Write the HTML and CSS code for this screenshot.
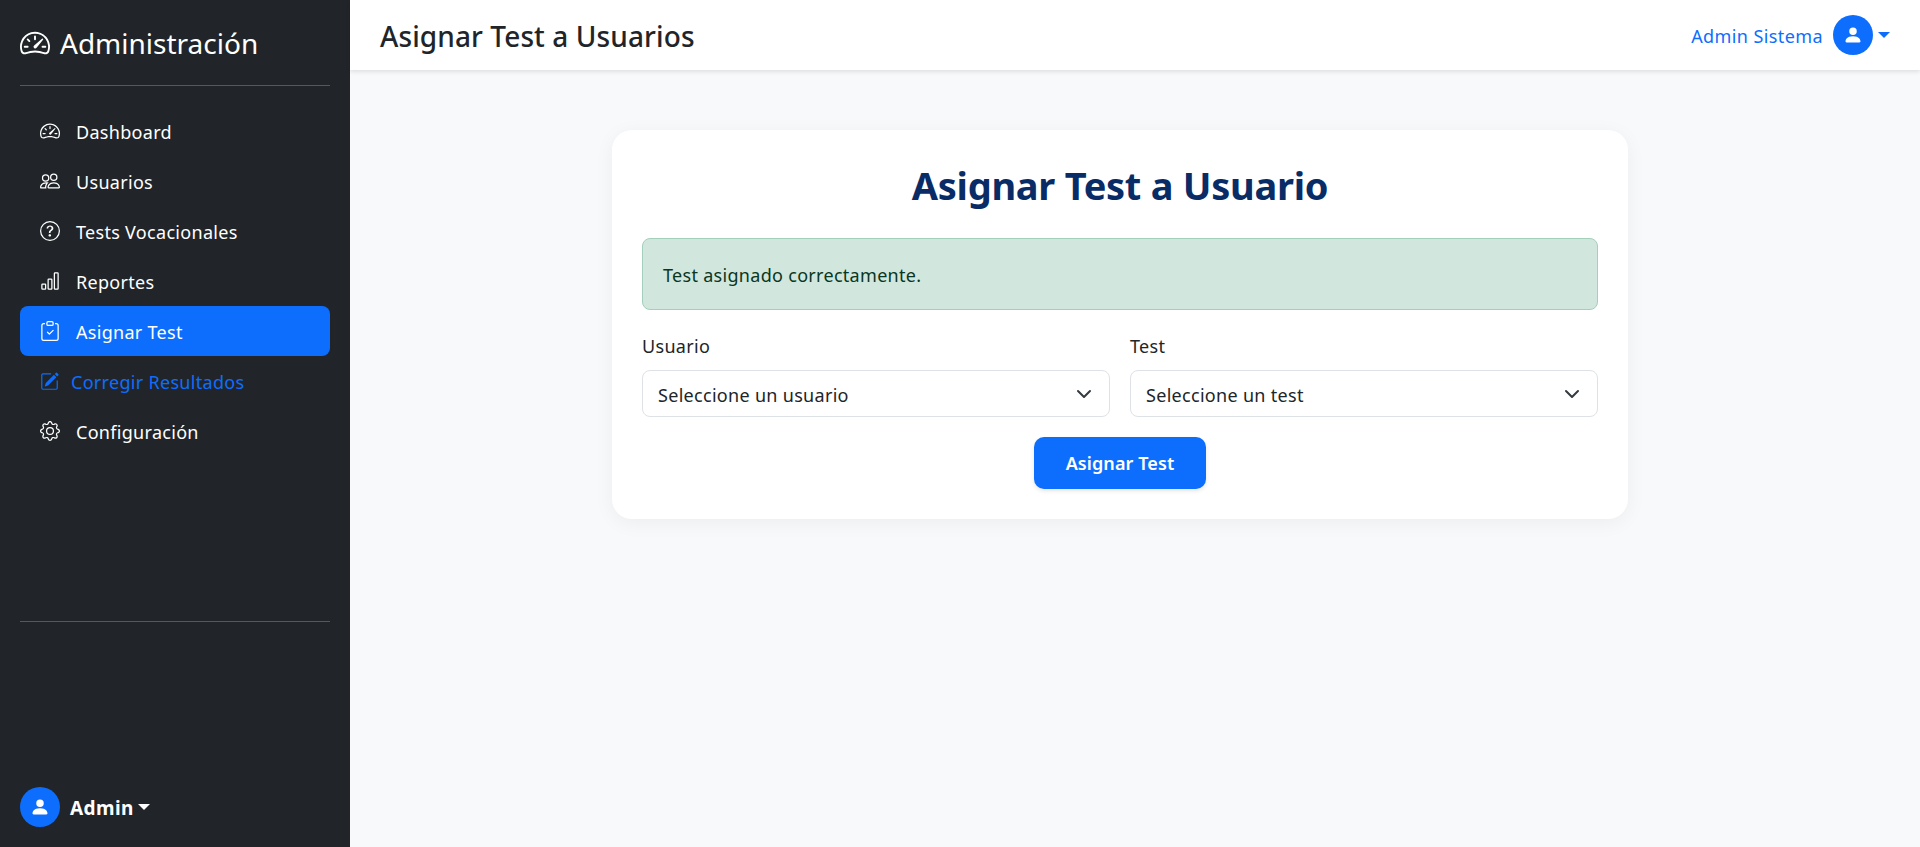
FILE: index.html
```html
<!DOCTYPE html>
<html lang="es">
  <head>
    <meta charset="utf-8" />
    <title>Asignar Test a Usuarios</title>

    <link rel="stylesheet" href="styles.css">
  </head>

  <body>
    <aside class="sidebar">
      <div class="brand">
        <svg class="brand__icon" viewBox="0 0 16 16" fill="currentColor"><path d="M8 4a.5.5 0 0 1 .5.5V6a.5.5 0 0 1-1 0V4.5A.5.5 0 0 1 8 4zM3.732 5.732a.5.5 0 0 1 .707 0l.915.914a.5.5 0 1 1-.708.708l-.914-.915a.5.5 0 0 1 0-.707zM2 10a.5.5 0 0 1 .5-.5h1.586a.5.5 0 0 1 0 1H2.5A.5.5 0 0 1 2 10zm9.5 0a.5.5 0 0 1 .5-.5h1.5a.5.5 0 0 1 0 1H12a.5.5 0 0 1-.5-.5zm.754-4.246a.389.389 0 0 0-.527-.02L7.547 9.31a.91.91 0 1 0 1.302 1.258l3.434-4.297a.389.389 0 0 0-.029-.518z"/><path fill-rule="evenodd" d="M0 10a8 8 0 1 1 15.547 2.661c-.442 1.253-1.845 1.602-2.932 1.25C11.309 13.488 9.475 13 8 13c-1.474 0-3.31.488-4.615.911-1.087.352-2.49.003-2.932-1.25A7.988 7.988 0 0 1 0 10zm8-7a7 7 0 0 0-6.603 9.329c.203.575.923.876 1.68.63C4.397 12.533 6.358 12 8 12s3.604.532 4.923.96c.757.245 1.477-.056 1.68-.631A7 7 0 0 0 8 3z"/></svg>
        <span>Administración</span>
      </div>
      <hr class="rule" />

      <nav class="nav">
        <a class="nav__link" href="#">
          <svg class="nav__icon" viewBox="0 0 16 16" fill="currentColor"><path d="M8 4a.5.5 0 0 1 .5.5V6a.5.5 0 0 1-1 0V4.5A.5.5 0 0 1 8 4zM3.732 5.732a.5.5 0 0 1 .707 0l.915.914a.5.5 0 1 1-.708.708l-.914-.915a.5.5 0 0 1 0-.707zM2 10a.5.5 0 0 1 .5-.5h1.586a.5.5 0 0 1 0 1H2.5A.5.5 0 0 1 2 10zm9.5 0a.5.5 0 0 1 .5-.5h1.5a.5.5 0 0 1 0 1H12a.5.5 0 0 1-.5-.5zm.754-4.246a.389.389 0 0 0-.527-.02L7.547 9.31a.91.91 0 1 0 1.302 1.258l3.434-4.297a.389.389 0 0 0-.029-.518z"/><path fill-rule="evenodd" d="M0 10a8 8 0 1 1 15.547 2.661c-.442 1.253-1.845 1.602-2.932 1.25C11.309 13.488 9.475 13 8 13c-1.474 0-3.31.488-4.615.911-1.087.352-2.49.003-2.932-1.25A7.988 7.988 0 0 1 0 10zm8-7a7 7 0 0 0-6.603 9.329c.203.575.923.876 1.68.63C4.397 12.533 6.358 12 8 12s3.604.532 4.923.96c.757.245 1.477-.056 1.68-.631A7 7 0 0 0 8 3z"/></svg>
          <span class="nav__text">Dashboard</span>
        </a>
        <a class="nav__link" href="#">
          <svg class="nav__icon" viewBox="0 0 16 16" fill="currentColor"><path d="M15 14s1 0 1-1-1-4-5-4-5 3-5 4 1 1 1 1h8Zm-7.978-1A.261.261 0 0 1 7 12.996c.001-.264.167-1.03.76-1.72C8.312 10.629 9.282 10 11 10c1.717 0 2.687.63 3.24 1.276.593.69.758 1.457.76 1.72l-.008.002a.274.274 0 0 1-.014.002H7.022ZM11 7a2 2 0 1 0 0-4 2 2 0 0 0 0 4Zm3-2a3 3 0 1 1-6 0 3 3 0 0 1 6 0ZM6.936 9.28a5.88 5.88 0 0 0-1.23-.247A7.35 7.35 0 0 0 5 9c-4 0-5 3-5 4 0 .667.333 1 1 1h4.216A2.238 2.238 0 0 1 5 13c0-1.01.377-2.042 1.09-2.904.243-.294.526-.569.846-.816ZM4.92 10A5.493 5.493 0 0 0 4 13H1c0-.26.164-1.03.76-1.724.545-.636 1.492-1.256 3.16-1.275ZM1.5 5.5a3 3 0 1 1 6 0 3 3 0 0 1-6 0Zm3-2a2 2 0 1 0 0 4 2 2 0 0 0 0-4Z"/></svg>
          <span class="nav__text">Usuarios</span>
        </a>
        <a class="nav__link" href="#">
          <svg class="nav__icon" viewBox="0 0 16 16" fill="currentColor"><path d="M8 15A7 7 0 1 1 8 1a7 7 0 0 1 0 14zm0 1A8 8 0 1 0 8 0a8 8 0 0 0 0 16z"/><path d="M5.255 5.786a.237.237 0 0 0 .241.247h.825c.138 0 .248-.113.266-.25.09-.656.54-1.134 1.342-1.134.686 0 1.314.343 1.314 1.168 0 .635-.374.927-.965 1.371-.673.489-1.206 1.06-1.168 1.987l.003.217a.25.25 0 0 0 .25.246h.811a.25.25 0 0 0 .25-.25v-.105c0-.718.273-.927 1.01-1.486.609-.463 1.244-.977 1.244-2.056 0-1.511-1.276-2.241-2.673-2.241-1.267 0-2.655.59-2.75 2.286zm1.557 5.763c0 .533.425.927 1.01.927.609 0 1.028-.394 1.028-.927 0-.552-.42-.94-1.029-.94-.584 0-1.009.388-1.009.94z"/></svg>
          <span class="nav__text">Tests Vocacionales</span>
        </a>
        <a class="nav__link" href="#">
          <svg class="nav__icon" viewBox="0 0 16 16" fill="currentColor"><path d="M4 11H2v3h2v-3zm5-4H7v7h2V7zm5-5v12h-2V2h2zm-2-1a1 1 0 0 0-1 1v12a1 1 0 0 0 1 1h2a1 1 0 0 0 1-1V2a1 1 0 0 0-1-1h-2zM6 7a1 1 0 0 1 1-1h2a1 1 0 0 1 1 1v7a1 1 0 0 1-1 1H7a1 1 0 0 1-1-1V7zm-5 4a1 1 0 0 1 1-1h2a1 1 0 0 1 1 1v3a1 1 0 0 1-1 1H2a1 1 0 0 1-1-1v-3z"/></svg>
          <span class="nav__text">Reportes</span>
        </a>
        <a class="nav__link nav__link--active" href="#">
          <svg class="nav__icon" viewBox="0 0 16 16" fill="currentColor"><path fill-rule="evenodd" d="M10.854 7.146a.5.5 0 0 1 0 .708l-3 3a.5.5 0 0 1-.708 0l-1.5-1.5a.5.5 0 1 1 .708-.708L7.5 9.793l2.646-2.647a.5.5 0 0 1 .708 0z"/><path d="M4 1.5H3a2 2 0 0 0-2 2V14a2 2 0 0 0 2 2h10a2 2 0 0 0 2-2V3.5a2 2 0 0 0-2-2h-1v1h1a1 1 0 0 1 1 1V14a1 1 0 0 1-1 1H3a1 1 0 0 1-1-1V3.5a1 1 0 0 1 1-1h1v-1z"/><path d="M9.5 1a.5.5 0 0 1 .5.5v1a.5.5 0 0 1-.5.5h-3a.5.5 0 0 1-.5-.5v-1a.5.5 0 0 1 .5-.5h3zm-3-1A1.5 1.5 0 0 0 5 1.5v1A1.5 1.5 0 0 0 6.5 4h3A1.5 1.5 0 0 0 11 2.5v-1A1.5 1.5 0 0 0 9.5 0h-3z"/></svg>
          <span class="nav__text">Asignar Test</span>
        </a>
        <a class="nav__link nav__link--plain" href="#">
          <svg class="nav__icon" viewBox="0 0 16 16" fill="currentColor"><path d="M15.502 1.94a.5.5 0 0 1 0 .706L14.459 3.69l-2-2L13.502.646a.5.5 0 0 1 .707 0l1.293 1.293zm-1.75 2.456-2-2L4.939 9.21a.5.5 0 0 0-.121.196l-.805 2.414a.25.25 0 0 0 .316.316l2.414-.805a.5.5 0 0 0 .196-.12l6.813-6.814z"/><path fill-rule="evenodd" d="M1 13.5A1.5 1.5 0 0 0 2.5 15h11a1.5 1.5 0 0 0 1.5-1.5v-6a.5.5 0 0 0-1 0v6a.5.5 0 0 1-.5.5h-11a.5.5 0 0 1-.5-.5v-11a.5.5 0 0 1 .5-.5H9a.5.5 0 0 0 0-1H2.5A1.5 1.5 0 0 0 1 2.5v11z"/></svg>
          <span class="nav__text">Corregir Resultados</span>
        </a>
        <a class="nav__link" href="#">
          <svg class="nav__icon" viewBox="0 0 16 16" fill="currentColor"><path d="M8 4.754a3.246 3.246 0 1 0 0 6.492 3.246 3.246 0 0 0 0-6.492zM5.754 8a2.246 2.246 0 1 1 4.492 0 2.246 2.246 0 0 1-4.492 0z"/><path d="M9.796 1.343c-.527-1.79-3.065-1.79-3.592 0l-.094.319a.873.873 0 0 1-1.255.52l-.292-.16c-1.64-.892-3.433.902-2.54 2.541l.159.292a.873.873 0 0 1-.52 1.255l-.319.094c-1.79.527-1.79 3.065 0 3.592l.319.094a.873.873 0 0 1 .52 1.255l-.16.292c-.892 1.64.901 3.434 2.541 2.54l.292-.159a.873.873 0 0 1 1.255.52l.094.319c.527 1.79 3.065 1.79 3.592 0l.094-.319a.873.873 0 0 1 1.255-.52l.292.16c1.64.893 3.434-.902 2.54-2.541l-.159-.292a.873.873 0 0 1 .52-1.255l.319-.094c1.79-.527 1.79-3.065 0-3.592l-.319-.094a.873.873 0 0 1-.52-1.255l.16-.292c.893-1.64-.902-3.433-2.541-2.54l-.292.159a.873.873 0 0 1-1.255-.52l-.094-.319zm-2.633.283c.246-.835 1.428-.835 1.674 0l.094.319a1.873 1.873 0 0 0 2.693 1.115l.291-.16c.764-.415 1.6.42 1.184 1.185l-.159.292a1.873 1.873 0 0 0 1.116 2.692l.318.094c.835.246.835 1.428 0 1.674l-.319.094a1.873 1.873 0 0 0-1.115 2.693l.16.291c.415.764-.42 1.6-1.185 1.184l-.291-.159a1.873 1.873 0 0 0-2.693 1.116l-.094.318c-.246.835-1.428.835-1.674 0l-.094-.319a1.873 1.873 0 0 0-2.692-1.115l-.292.16c-.764.415-1.6-.42-1.184-1.185l.159-.291A1.873 1.873 0 0 0 1.945 8.93l-.319-.094c-.835-.246-.835-1.428 0-1.674l.319-.094A1.873 1.873 0 0 0 3.06 4.377l-.16-.292c-.415-.764.42-1.6 1.185-1.184l.292.159a1.873 1.873 0 0 0 2.692-1.115l.094-.319z"/></svg>
          <span class="nav__text">Configuración</span>
        </a>
      </nav>

      <hr class="rule rule--low" />

      <a class="account" href="#">
        <span class="avatar"><svg viewBox="0 0 16 16" fill="currentColor"><path d="M3 14s-1 0-1-1 1-4 6-4 6 3 6 4-1 1-1 1H3Zm5-6a3 3 0 1 0 0-6 3 3 0 0 0 0 6Z"/></svg></span>
        <strong>Admin</strong>
        <span class="caret"></span>
      </a>
    </aside>

    <div class="page">
      <header class="topbar">
        <h1 class="topbar__title">Asignar Test a Usuarios</h1>
        <a class="topbar__user" href="#">
          <span class="topbar__name">Admin Sistema</span>
          <span class="avatar"><svg viewBox="0 0 16 16" fill="currentColor"><path d="M3 14s-1 0-1-1 1-4 6-4 6 3 6 4-1 1-1 1H3Zm5-6a3 3 0 1 0 0-6 3 3 0 0 0 0 6Z"/></svg></span>
          <span class="caret"></span>
        </a>
      </header>

      <main class="content">
        <section class="card">
          <h2 class="card__title">Asignar Test a Usuario</h2>

          <div class="alert">Test asignado correctamente.</div>

          <form class="assign">
            <div class="assign__fields">
              <div class="field">
                <label class="field__label" for="usuario">Usuario</label>
                <select class="field__select" id="usuario">
                  <option>Seleccione un usuario</option>
                </select>
              </div>
              <div class="field">
                <label class="field__label" for="test">Test</label>
                <select class="field__select" id="test">
                  <option>Seleccione un test</option>
                </select>
              </div>
            </div>
            <button class="assign__submit" type="submit">Asignar Test</button>
          </form>
        </section>
      </main>
    </div>
  </body>
</html>
```

FILE: styles.css
```css
:root {
  font-family: 'Noto Sans', 'Open Sans', sans-serif;
  font-size: 18px;
  line-height: 27px;
  letter-spacing: 0.3px;
}

* {
  box-sizing: border-box;
}

html,
body {
  height: 100%;
}

body {
  display: flex;
  margin: 0;
  overflow: hidden;
  background-color: #f8f9fa;
  color: #212529;
}

a {
  text-decoration: none;
}

svg {
  display: block;
}

/* sidebar */
.sidebar {
  display: flex;
  flex-direction: column;
  flex: 0 0 350px;
  height: 847px;
  padding: 20px;
  background-color: #212529;
  color: #fff;
}

.brand {
  display: flex;
  align-items: center;
  gap: 10px;
  height: 46px;
  font-size: 28px;
  line-height: 1;
  letter-spacing: 0;
}

.brand__icon {
  width: 30px;
  height: 30px;
}

.rule {
  width: 100%;
  margin: 19px 0 20px;
  border: 0;
  border-top: 1px solid #55585c;
}

.rule--low {
  margin: 165px 0 0;
}

.nav {
  display: flex;
  flex-direction: column;
}

.nav__link {
  display: flex;
  align-items: center;
  gap: 16px;
  height: 50px;
  padding: 0 20px;
  border-radius: 8px;
  color: #fff;
}

.nav__text {
  padding-top: 2px;
}

.nav__link--active {
  background-color: #0d6efd;
}

.nav__link--plain {
  gap: 12px;
  color: #0d6efd;
}

.nav__link--plain .nav__icon {
  width: 19px;
  height: 19px;
}

.nav__icon {
  flex: none;
  width: 20px;
  height: 20px;
}

.avatar {
  display: flex;
  align-items: center;
  justify-content: center;
  flex: none;
  width: 40px;
  height: 40px;
  border-radius: 50%;
  background-color: #0d6efd;
  color: #fff;
}

.avatar svg {
  width: 20px;
  height: 20px;
}

.caret {
  width: 0;
  height: 0;
  border-top: 6px solid currentColor;
  border-right: 6px solid transparent;
  border-left: 6px solid transparent;
}

.account {
  display: flex;
  align-items: center;
  margin-top: auto;
  color: #fff;
}

.account strong {
  margin-left: 10px;
  margin-right: 4px;
  padding-top: 2px;
  font-size: 19px;
  letter-spacing: 0.4px;
}

/* top bar */
.page {
  flex: 1;
  min-width: 0;
}

.topbar {
  display: flex;
  align-items: center;
  justify-content: space-between;
  height: 70px;
  padding: 0 30px;
  background-color: #fff;
  box-shadow: 0 2px 4px rgba(0, 0, 0, 0.1);
}

.topbar__title {
  margin: 0;
  padding-top: 2px;
  font-size: 28px;
  font-weight: 500;
  letter-spacing: 0.1px;
}

.topbar__user {
  display: flex;
  align-items: center;
  gap: 10px;
  color: #0d6efd;
  letter-spacing: 0.4px;
}

.topbar__name {
  padding-top: 2px;
}

.topbar__user .avatar {
  margin-right: -5px;
}

/* card */
.content {
  padding: 60px 292px 0 262px;
}

.card {
  padding: 30px;
  border-radius: 20px;
  background-color: #fff;
  box-shadow: 0 4px 20px rgba(0, 0, 0, 0.05);
}

.card__title {
  margin: 0 0 28px;
  color: #0a2c66;
  font-size: 38px;
  font-weight: 700;
  line-height: 50px;
  letter-spacing: -0.27px;
  text-align: center;
}

.alert {
  padding: 23px 20px 20px;
  border: 1px solid #a3cfbb;
  border-radius: 8px;
  background-color: #d1e7dd;
  color: #0a3622;
}

.assign {
  display: flex;
  flex-direction: column;
  align-items: center;
  margin-top: 23px;
}

.assign__fields {
  display: grid;
  grid-template-columns: 1fr 1fr;
  gap: 20px;
  width: 100%;
}

.field__label {
  display: block;
  margin-bottom: 10px;
}

.field__select {
  display: block;
  width: 100%;
  height: 47px;
  padding: 4px 40px 0 15px;
  border: 1px solid #dee2e6;
  border-radius: 8px;
  background: #fff url("data:image/svg+xml,%3csvg xmlns='http://www.w3.org/2000/svg' viewBox='0 0 16 16'%3e%3cpath fill='none' stroke='%23343a40' stroke-linecap='round' stroke-linejoin='round' stroke-width='2' d='m2 5 6 6 6-6'/%3e%3c/svg%3e") no-repeat right 17px center / 16px 16px;
  color: #212529;
  font: inherit;
  letter-spacing: 0.3px;
  appearance: none;
}

.assign__submit {
  margin-top: 20px;
  width: 172px;
  height: 52px;
  border: 0;
  border-radius: 10px;
  background-color: #0d6efd;
  box-shadow: 0 2px 4px rgba(0, 0, 0, 0.1);
  color: #fff;
  font: inherit;
  font-weight: 600;
  letter-spacing: 0.1px;
}
```
